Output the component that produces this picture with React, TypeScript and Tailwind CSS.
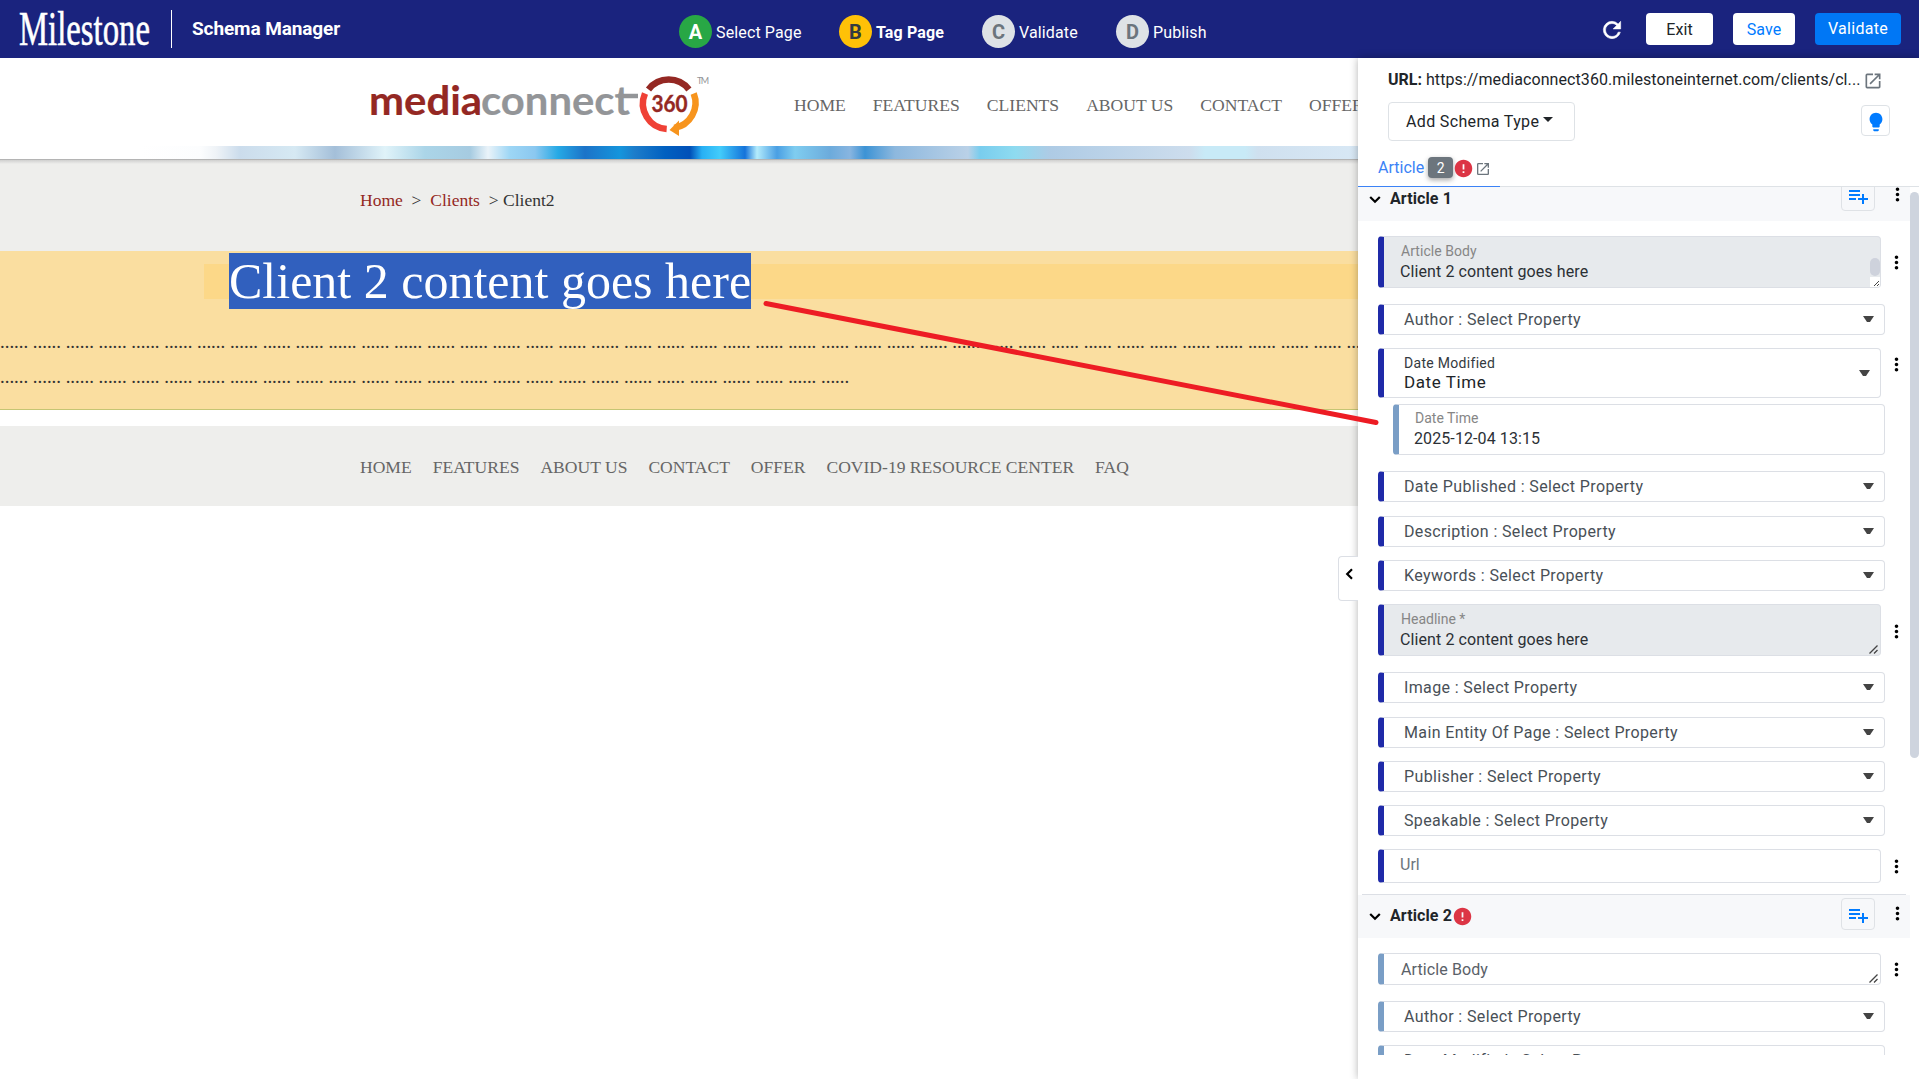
import type { ReactNode } from "react";
import {
  MdOpenInNew,
  MdLightbulb,
  MdPlaylistAdd,
  MdMoreVert,
  MdError,
} from "react-icons/md";

interface Step {
  letter: string;
  label: string;
  wrap: string;
  dot: string;
}

const steps: Step[] = [
  { letter: "A", label: "Select Page", wrap: "w-[141px] pl-0", dot: "bg-[#28a745] text-white" },
  { letter: "B", label: "Tag Page", wrap: "w-[143px] pl-[19px] border-[#ffc107] font-bold", dot: "bg-[#ffc107] text-[#343a40]" },
  { letter: "C", label: "Validate", wrap: "w-[134px] pl-[19px]", dot: "bg-[#dee2e6] text-[#6c757d]" },
  { letter: "D", label: "Publish", wrap: "w-[134px] pl-[19px]", dot: "bg-[#dee2e6] text-[#6c757d]" },
];

const siteNav = ["HOME", "FEATURES", "CLIENTS", "ABOUT US", "CONTACT", "OFFER"];
const footerNav = ["HOME", "FEATURES", "ABOUT US", "CONTACT", "OFFER", "COVID-19 RESOURCE CENTER", "FAQ"];

const dots = (n: number) => Array(n).fill("......").join(" ");

function MilestoneLogo() {
  return (
    <svg width="134" height="48" viewBox="0 0 134 48" className="ml-[18px] shrink-0" fill="#fff">
      <text
        x="1"
        y="38"
        textLength="131"
        lengthAdjust="spacingAndGlyphs"
        fontFamily="'Liberation Serif', serif"
        fontSize="49"
        stroke="#fff"
        strokeWidth="0.6"
      >
        Milestone
      </text>
    </svg>
  );
}

function MediaConnectLogo() {
  return (
    <svg width="340" height="64" viewBox="0 0 340 64" className="shrink-0 overflow-visible">
      <g fontFamily="Lato, sans-serif" fontWeight="700" fontSize="41" strokeWidth="0.2">
        <text x="-2" y="44.500" fill="#942823" stroke="#942823" textLength="113" lengthAdjust="spacingAndGlyphs">media</text>
        <text x="110" y="44.500" fill="#939598" stroke="#939598" textLength="149" lengthAdjust="spacingAndGlyphs">connect</text>
      </g>
      <path d="M247 26H267" stroke="#939598" strokeWidth="4.500" />
      <g fill="none" strokeWidth="6.500">
        <path d="M277.500 19.500A25.500 25.500 0 0 1 317.900 19.500" stroke="#942823" />
        <path d="M274 23.500A25.500 25.500 0 0 0 295.700 59" stroke="#ef4136" />
        <path d="M322.700 23.500A25.500 25.500 0 0 1 303.200 58" stroke="#f7941d" />
      </g>
      <path d="M298.500 60L308 50.500V66Z" fill="#f7941d" />
      <text x="280.500" y="42" fill="#942823" stroke="#942823" strokeWidth="0.4" fontFamily="Lato, sans-serif" fontWeight="700" fontSize="22" textLength="36" lengthAdjust="spacingAndGlyphs">360</text>
      <text x="326" y="14" fill="#939598" fontFamily="Lato, sans-serif" fontSize="9" textLength="12">TM</text>
    </svg>
  );
}

function RefreshIcon() {
  return (
    <svg viewBox="0 0 24 24" fill="currentColor" stroke="currentColor" strokeWidth="0.5" className="mt-[4px] mr-[21px] size-[26px]">
      <path d="M17.650 6.350A7.958 7.958 0 0 0 12 4a8 8 0 1 0 7.730 10h-2.080A5.990 5.990 0 0 1 12 18a6 6 0 1 1 0-12c1.660 0 3.140.69 4.220 1.780L13 11h7V4z" />
    </svg>
  );
}

function Chevron({ className = "" }: { className?: string }) {
  return (
    <svg viewBox="0 0 20 20" fill="none" stroke="#000" strokeWidth="2.200" className={`size-5 shrink-0 ${className}`}>
      <path d="M5.200 8L10 12.800L14.800 8" />
    </svg>
  );
}

function TopBar() {
  return (
    <header className="flex h-[58px] shrink-0 bg-[#1a237e] text-white">
      <div className="flex w-[679px] items-start pt-[7px]">
        <MilestoneLogo />
        <div className="mt-[3px] ml-[19px] h-[38px] w-px bg-white" />
        <h1 className="mt-[10px] ml-5 text-[19px] leading-6 font-bold tracking-[-0.1px]">Schema Manager</h1>
      </div>
      <nav className="flex">
        {steps.map((s) => (
          <div key={s.letter} className={`flex items-center border-b-[3px] border-transparent pt-[8px] ${s.wrap}`}>
            <span className={`mr-1 flex size-[33px] shrink-0 items-center justify-center rounded-full text-[20px] font-bold ${s.dot}`}>
              {s.letter}
            </span>
            <span className="pt-[2px] text-[16px] tracking-[0.13px] whitespace-nowrap">{s.label}</span>
          </div>
        ))}
      </nav>
      <div className="ml-auto flex items-start pt-[13px] pr-[18px]">
        <RefreshIcon />
        <button className="mr-5 h-8 w-[67px] rounded-[4px] bg-white pt-px text-[16px] tracking-[0.1px] text-[#212529]">Exit</button>
        <button className="mr-5 h-8 w-[62px] rounded-[4px] bg-white pt-px text-[16px] tracking-[0.1px] text-[#007bff]">Save</button>
        <button className="h-8 w-[86px] rounded-[4px] bg-[#0077f5] pb-px text-[16px] tracking-[0.3px]">Validate</button>
      </div>
    </header>
  );
}

function ClientSite() {
  return (
    <main className="w-[1358px] shrink-0 overflow-hidden bg-white font-['Liberation_Serif',serif]">
      <div className="flex h-[88px] items-start">
        <div className="mt-[12px] ml-[371px] w-[422px] shrink-0">
          <MediaConnectLogo />
        </div>
        <nav className="mt-[36px] flex gap-[27px] pl-px text-[17.600px] leading-[22px] whitespace-nowrap text-[#666]">
          {siteNav.map((n) => (
            <a key={n}>{n}</a>
          ))}
        </nav>
      </div>
      <div className="h-[13px] bg-[linear-gradient(90deg,#fff_140px,#fcfdfe_200px,#eff3f7_216px,#cbdcec_240px,#d6e9f3_295px,#a4bfd9_335px,#e0f3f9_385px,#abd5e8_425px,#a6cbe1_470px,#eaf3f9_488px,#9dd6f5_510px,#8bc8f0_535px,#26a9e5_558px,#1c73c8_585px,#1595dc_620px,#1c7cca_635px,#0160c0_665px,#0150b8_690px,#28b0f4_702px,#42ccfb_720px,#1573da_745px,#b4ecfc_757px,#4a9fe3_777px,#7fcdf0_795px,#6cabdc_830px,#88b5e0_850px,#3c93d5_865px,#8db8de_895px,#bad1e7_968px,#79cdee_980px,#8edbf0_1015px,#aecbe5_1050px,#cddded_1190px,#c8eaf7_1205px,#c8eaf7_1245px,#cfe0ef_1258px,#d8e8f5_1358px)]" />
      <div className="h-[92px] border-t border-[#b4b4b4] bg-[#eeeeec] bg-[linear-gradient(#d0d0cf,#eeeeec_4px)] pt-[29px] pl-[360px] text-[17.550px] leading-[22px] whitespace-pre text-[#333]">
        <a className="text-[#942823]">Home</a>{"  >  "}<a className="text-[#942823]">Clients</a>{"  > "}Client2
      </div>
      <section className="h-[159px] border-b border-[#c5c573] bg-[#fadea0] pt-[13px] text-[18.770px] leading-[35px] whitespace-nowrap text-[#333]">
        <h2 className="ml-[204px] h-[35px] bg-[#fcd888] pl-[25px] text-[50px] leading-[35px]">
          <span className="bg-[#3160be] text-white">Client 2 content goes here</span>
        </h2>
        <p className="mt-[25px]">{dots(44)}</p>
        <p>{dots(26)}</p>
      </section>
      <footer className="mt-4 flex h-20 gap-[21px] bg-[#eeeeec] pt-[30px] pl-[360px] text-[17.560px] leading-[22px] text-[#666]">
        {footerNav.map((n) => (
          <a key={n}>{n}</a>
        ))}
      </footer>
    </main>
  );
}

type Tone = "dark" | "light";

function Field({ tone = "dark", className = "", children }: { tone?: Tone; className?: string; children: ReactNode }) {
  return (
    <div
      className={`relative ml-5 flex shrink-0 overflow-hidden rounded-[4px] border border-l-[6px] border-[#dcdfe5] ${
        tone === "dark" ? "border-l-[#1f2aa8]" : "border-l-[#7a9ec6]"
      } ${className}`}
    >
      {children}
    </div>
  );
}

function Caret() {
  return (
    <svg width="11" height="7" viewBox="0 0 11 7" className="mr-[10px] ml-auto" fill="#444">
      <path d="M0 0H11L7 6H4Z" />
    </svg>
  );
}

function SelectField({ label, tone, className = "" }: { label: string; tone?: Tone; className?: string }) {
  return (
    <Field tone={tone} className={`h-[31px] w-[507px] items-center ${className}`}>
      <span className="pl-5 text-[16px] tracking-[0.37px] text-[#495057]">{label} : Select Property</span>
      <Caret />
    </Field>
  );
}

function Kebab({ className = "" }: { className?: string }) {
  return <MdMoreVert className={`size-[21px] shrink-0 text-black ${className}`} />;
}

function Grip() {
  return (
    <svg width="9" height="9" viewBox="0 0 9 9" className="absolute right-[2px] bottom-px" stroke="#444" strokeWidth="1.300">
      <path d="M0.500 8.500L8.500 0.500M5 8.500L8.500 5" />
    </svg>
  );
}

interface SectionHeaderProps {
  title: string;
  error?: boolean;
  className?: string;
  titleClass: string;
}

function SectionHeader({ title, error, className = "", titleClass }: SectionHeaderProps) {
  return (
    <div className={`flex w-[552px] shrink-0 items-start bg-[#f7f8fa] ${className}`}>
      <div className={`flex items-start ${titleClass}`}>
        <Chevron className="mt-[2px] ml-[7px]" />
        <span className="ml-[5px] text-[16px] leading-6 font-bold tracking-[0.1px] text-[#212529]">{title}</span>
        {error && <MdError className="mt-[2px] size-[21px] text-[#dc3545]" />}
      </div>
      <button className="ml-auto flex h-[32px] w-[34px] items-center justify-center rounded-[4px] border border-[#dfe2e6] text-[#007bff]">
        <MdPlaylistAdd className="mt-[2px] size-[24px]" />
      </button>
      <Kebab className="mr-[2px] ml-[12px] mt-[5px]" />
    </div>
  );
}

function SchemaPanel() {
  return (
    <aside className="relative z-10 flex w-[561px] shrink-0 flex-col bg-white shadow-[0_0_8px_rgba(0,0,0,0.3)]">
      <div className="flex h-[44px] items-start pt-[10px] pl-[30px] text-[16px] leading-6 text-[#212529]">
        <b className="mr-1">URL:</b>
        <span className="w-[434px] tracking-[0.08px] whitespace-nowrap">https://mediaconnect360.milestoneinternet.com/clients/cl...</span>
        <MdOpenInNew className="mt-[3px] ml-[3px] size-5 text-[#6c757d]" />
      </div>
      <div className="flex pl-[30px]">
        <button className="flex h-[39px] w-[187px] items-center rounded-[4px] border border-[#dee2e6] pl-[17px] text-[16px] tracking-[0.35px] text-[#212529]">
          Add Schema Type
          <span className="mb-[5px] ml-1 border-x-[5px] border-t-[5px] border-x-transparent border-t-[#212529]" />
        </button>
        <button className="mt-[3px] ml-[286px] flex h-[31px] w-[29px] items-center justify-center rounded-[4px] border border-[#dee2e6] text-[#007bff]">
          <MdLightbulb className="mt-[3px] size-[22px]" />
        </button>
      </div>
      <div className="flex h-[46px] border-b border-[#dee2e6]">
        <div className="-mb-px flex w-[142px] items-start border-b border-[#3b82f6] pl-5 text-[16px] leading-6 text-[#3b82f6]">
          <span className="mt-[15px]">Article</span>
          <span className="mt-[16px] ml-1 flex h-[21px] w-[25px] items-center justify-center rounded-[4px] bg-[#6c757d] text-[14px] text-white shadow-[0_2px_5px_rgba(0,0,0,0.35)]">2</span>
          <MdError className="mt-[17px] size-[21px] text-[#dc3545]" />
          <MdOpenInNew className="mt-[20px] ml-px size-4 text-[#6c757d]" />
        </div>
      </div>
      <div className="relative flex h-[868px] flex-col overflow-hidden">
        <SectionHeader title="Article 1" className="-mt-[8px] h-[42px]" titleClass="pt-[8px]" />
        <div className="mt-[15px] flex items-start">
          <Field className="h-[52px] w-[503px] bg-[#e7eaed]">
            <div className="pl-[17px]">
              <div className="mt-[4px] text-[14px] leading-5 tracking-[0.05px] text-[#868686]">Article Body</div>
              <div className="mt-px -ml-px text-[16px] leading-5 tracking-[0.1px] text-[#2b3035]">Client 2 content goes here</div>
            </div>
            <div className="absolute right-0 bottom-0 flex h-[29px] w-[10px] flex-col justify-between">
              <span className="h-[18px] rounded-full bg-[#ced2dc]" />
              <span className="h-[10px] bg-white pt-[4px] pl-1">
                <svg width="5" height="5" stroke="#444"><path d="M0 5L5 0M3 5L5 3" /></svg>
              </span>
            </div>
          </Field>
          <Kebab className="mt-4 ml-[5px]" />
        </div>
        <SelectField label="Author" className="mt-4" />
        <div className="mt-[13px] flex items-start">
          <Field className="h-[50px] w-[503px] items-center">
            <div className="pl-5">
              <div className="text-[14px] leading-[18px] tracking-[0.3px] text-[#343a40]">Date Modified</div>
              <div className="text-[17px] leading-5 tracking-[0.6px] text-[#212529]">Date Time</div>
            </div>
            <Caret />
          </Field>
          <Kebab className="mt-[6px] ml-[5px]" />
        </div>
        <div className="mt-[6px] pl-[15px]">
          <Field tone="light" className="h-[51px] w-[492px] border-[#ced4da]">
            <div className="pl-[16px]">
              <div className="mt-[3px] text-[14px] leading-5 text-[#868686]">Date Time</div>
              <div className="mt-px -ml-px text-[16px] leading-5 tracking-[0.1px] text-[#2b3035]">2025-12-04 13:15</div>
            </div>
          </Field>
        </div>
        <SelectField label="Date Published" className="mt-4" />
        <SelectField label="Description" className="mt-[14px]" />
        <SelectField label="Keywords" className="mt-[13px]" />
        <div className="mt-[13px] flex items-start">
          <Field className="h-[52px] w-[503px] bg-[#e7eaed]">
            <div className="pl-[17px]">
              <div className="mt-[4px] text-[14px] leading-5 text-[#868686]">Headline *</div>
              <div className="mt-px -ml-px text-[16px] leading-5 tracking-[0.1px] text-[#2b3035]">Client 2 content goes here</div>
            </div>
            <Grip />
          </Field>
          <Kebab className="mt-[17px] ml-[5px]" />
        </div>
        <SelectField label="Image" className="mt-4" />
        <SelectField label="Main Entity Of Page" className="mt-[14px]" />
        <SelectField label="Publisher" className="mt-[13px]" />
        <SelectField label="Speakable" className="mt-[13px]" />
        <div className="mt-[13px] flex items-start">
          <Field className="h-[34px] w-[503px] border-[#ced4da]">
            <span className="mt-[3px] pl-[16px] text-[16px] leading-6 text-[#6c757d]">Url</span>
          </Field>
          <Kebab className="mt-[7px] ml-[5px]" />
        </div>
        <div className="mt-[11px] ml-1 h-px w-[544px] shrink-0 bg-[#dcdfe5]" />
        <SectionHeader title="Article 2" error className="h-[43px] pt-[3px]" titleClass="pt-[6px]" />
        <div className="mt-[15px] flex items-start">
          <Field tone="light" className="h-[32px] w-[503px] items-center">
            <span className="pt-[2px] pl-[17px] text-[16px] tracking-[0.1px] text-[#5a6168]">Article Body</span>
            <Grip />
          </Field>
          <Kebab className="mt-[6px] ml-[5px]" />
        </div>
        <SelectField tone="light" label="Author" className="mt-4" />
        <SelectField tone="light" label="Date Modified" className="mt-[13px]" />
        <div className="absolute top-[5px] right-0 h-[566px] w-[9px] rounded-full bg-[#ced4de]" />
      </div>
      <button className="absolute top-[498px] -left-[20px] flex h-[45px] w-5 items-start justify-center rounded-l-[4px] border border-r-0 border-[#dcdfe5] bg-white pt-[7px] pl-[2px]">
        <Chevron className="rotate-90" />
      </button>
    </aside>
  );
}

export default function App() {
  return (
    <div className="relative flex h-[1079px] w-[1919px] flex-col overflow-hidden bg-white font-[Roboto,sans-serif]">
      <TopBar />
      <div className="flex min-h-0 flex-1">
        <ClientSite />
        <SchemaPanel />
      </div>
      <svg className="pointer-events-none absolute top-[300px] left-[760px] z-20" width="620" height="130">
        <path d="M6 3.500L616 122.500" stroke="#ed1c24" strokeWidth="5" strokeLinecap="round" />
      </svg>
    </div>
  );
}
